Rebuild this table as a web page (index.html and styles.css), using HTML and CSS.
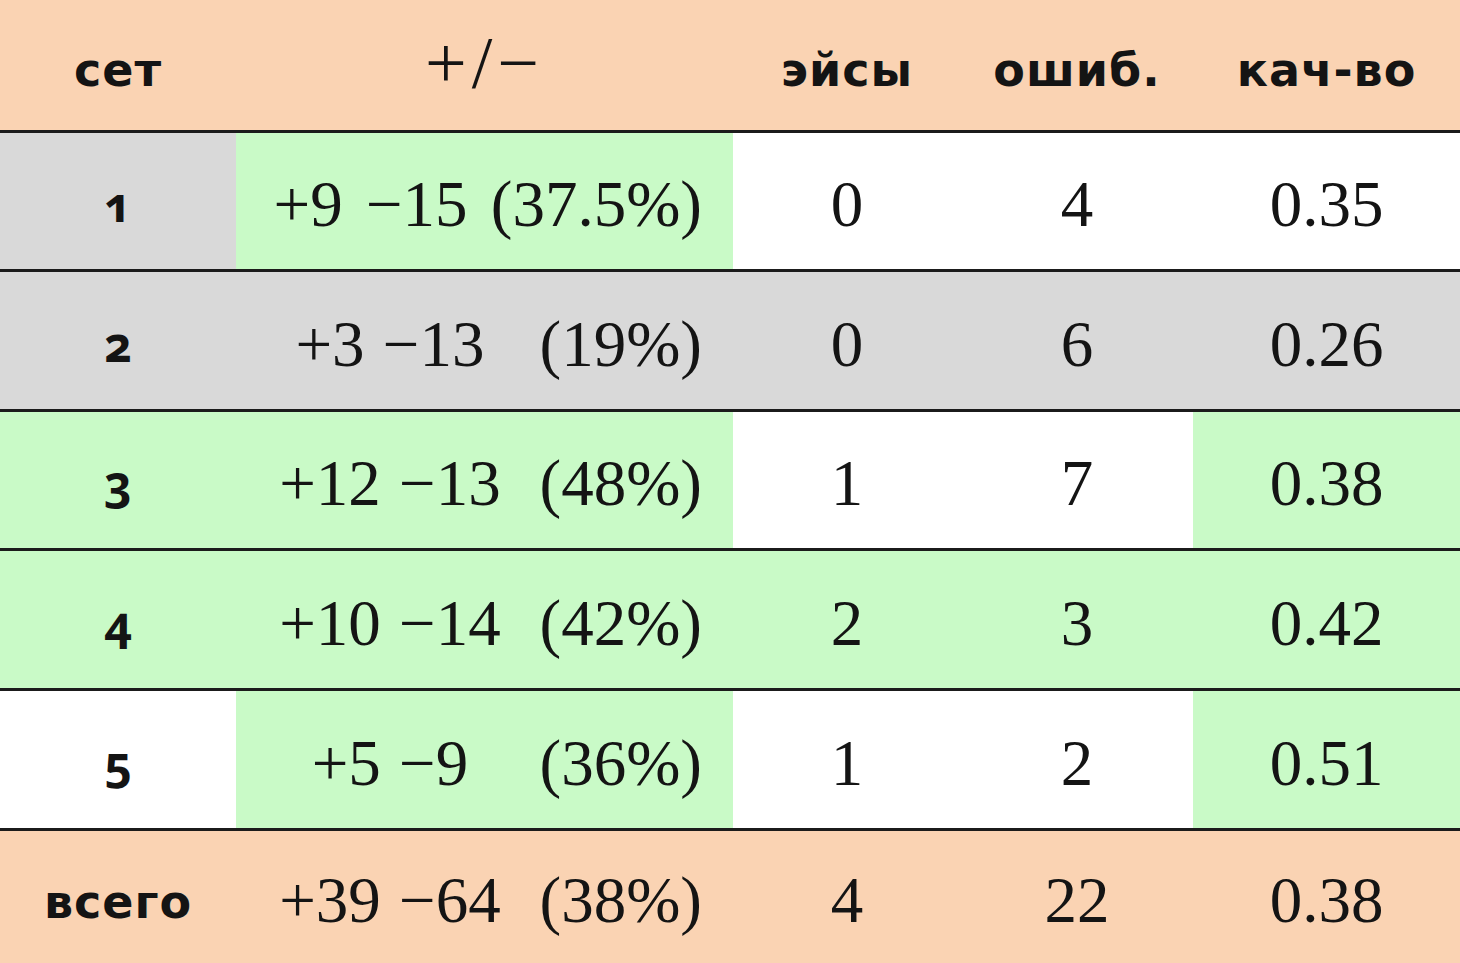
FILE: index.html
```html
<!DOCTYPE html>
<html lang="ru">
<head>
<meta charset="utf-8">
<title>Статистика по сетам</title>
<link rel="stylesheet" href="styles.css">
</head>
<body>
<table class="stats">
  <colgroup>
    <col class="c-set"><col class="c-pm"><col class="c-ace"><col class="c-err"><col class="c-q">
  </colgroup>
  <thead>
    <tr class="head">
      <th class="lbl">сет</th>
      <th class="num pmh">+/−</th>
      <th class="lbl">эйсы</th>
      <th class="lbl">ошиб.</th>
      <th class="lbl">кач-во</th>
    </tr>
  </thead>
  <tbody>
    <tr>
      <td class="set gray">1</td>
      <td class="pm green"><div class="pmbox"><span class="full">+9 −15 (37.5%)</span></div></td>
      <td class="num white">0</td>
      <td class="num white">4</td>
      <td class="num white">0.35</td>
    </tr>
    <tr>
      <td class="set gray">2</td>
      <td class="pm gray"><div class="pmbox"><span class="pv">+3 −13</span><span class="pct">(19%)</span></div></td>
      <td class="num gray">0</td>
      <td class="num gray">6</td>
      <td class="num gray">0.26</td>
    </tr>
    <tr>
      <td class="set green">3</td>
      <td class="pm green"><div class="pmbox"><span class="pv">+12 −13</span><span class="pct">(48%)</span></div></td>
      <td class="num white">1</td>
      <td class="num white">7</td>
      <td class="num green">0.38</td>
    </tr>
    <tr>
      <td class="set green">4</td>
      <td class="pm green"><div class="pmbox"><span class="pv">+10 −14</span><span class="pct">(42%)</span></div></td>
      <td class="num green">2</td>
      <td class="num green">3</td>
      <td class="num green">0.42</td>
    </tr>
    <tr>
      <td class="set white">5</td>
      <td class="pm green"><div class="pmbox"><span class="pv">+5 −9</span><span class="pct">(36%)</span></div></td>
      <td class="num white">1</td>
      <td class="num white">2</td>
      <td class="num green">0.51</td>
    </tr>
  </tbody>
  <tfoot>
    <tr class="foot">
      <td class="lbl">всего</td>
      <td class="pm"><div class="pmbox"><span class="pv">+39 −64</span><span class="pct">(38%)</span></div></td>
      <td class="num">4</td>
      <td class="num">22</td>
      <td class="num">0.38</td>
    </tr>
  </tfoot>
</table>
</body>
</html>
```

FILE: styles.css
```css
html, body {
  margin: 0;
  padding: 0;
  background: #ffffff;
}

.stats {
  width: 1460px;
  height: 963px;
  border-collapse: collapse;
  table-layout: fixed;
  color: #141414;
}

.c-set { width: 236px; }
.c-pm { width: 497px; }
.c-ace { width: 228px; }
.c-err { width: 232px; }
.c-q { width: 267px; }

.stats th,
.stats td {
  padding: 0;
  text-align: center;
  vertical-align: middle;
}

.head {
  height: 131px;
  background: #fad3b3;
}

.stats tbody tr {
  height: 139px;
  border-top: 3px solid #1b1b1b;
}

.foot {
  height: 134px;
  background: #fad3b3;
  border-top: 3px solid #1b1b1b;
}

.lbl {
  font-family: "DejaVu Sans", sans-serif;
  font-weight: bold;
  font-size: 46px;
  letter-spacing: 1px;
  padding-top: 10px !important;
}

.num,
.pm {
  font-family: "Liberation Serif", "Times New Roman", serif;
  font-weight: normal;
  font-size: 65px;
  padding-top: 8px !important;
}

.head .pmh {
  font-size: 74px;
  letter-spacing: 5px;
  padding-top: 0 !important;
  padding-bottom: 2px !important;
}

.set {
  font-family: "Open Sans", "DejaVu Sans", sans-serif;
  font-weight: bold;
  font-size: 48px;
  font-variant-numeric: oldstyle-nums;
  padding-top: 6px !important;
}

.pmbox {
  display: flex;
  justify-content: flex-end;
  align-items: baseline;
  gap: 29px;
  padding-right: 31px;
  white-space: pre;
}

.full {
  word-spacing: 7px;
}

.pv {
  width: 236px;
  text-align: center;
  word-spacing: 2px;
}

.pct {
  width: 165px;
  text-align: right;
}

.gray { background: #d9d9d9; }
.green { background: #c9fac7; }
.white { background: #ffffff; }
```
